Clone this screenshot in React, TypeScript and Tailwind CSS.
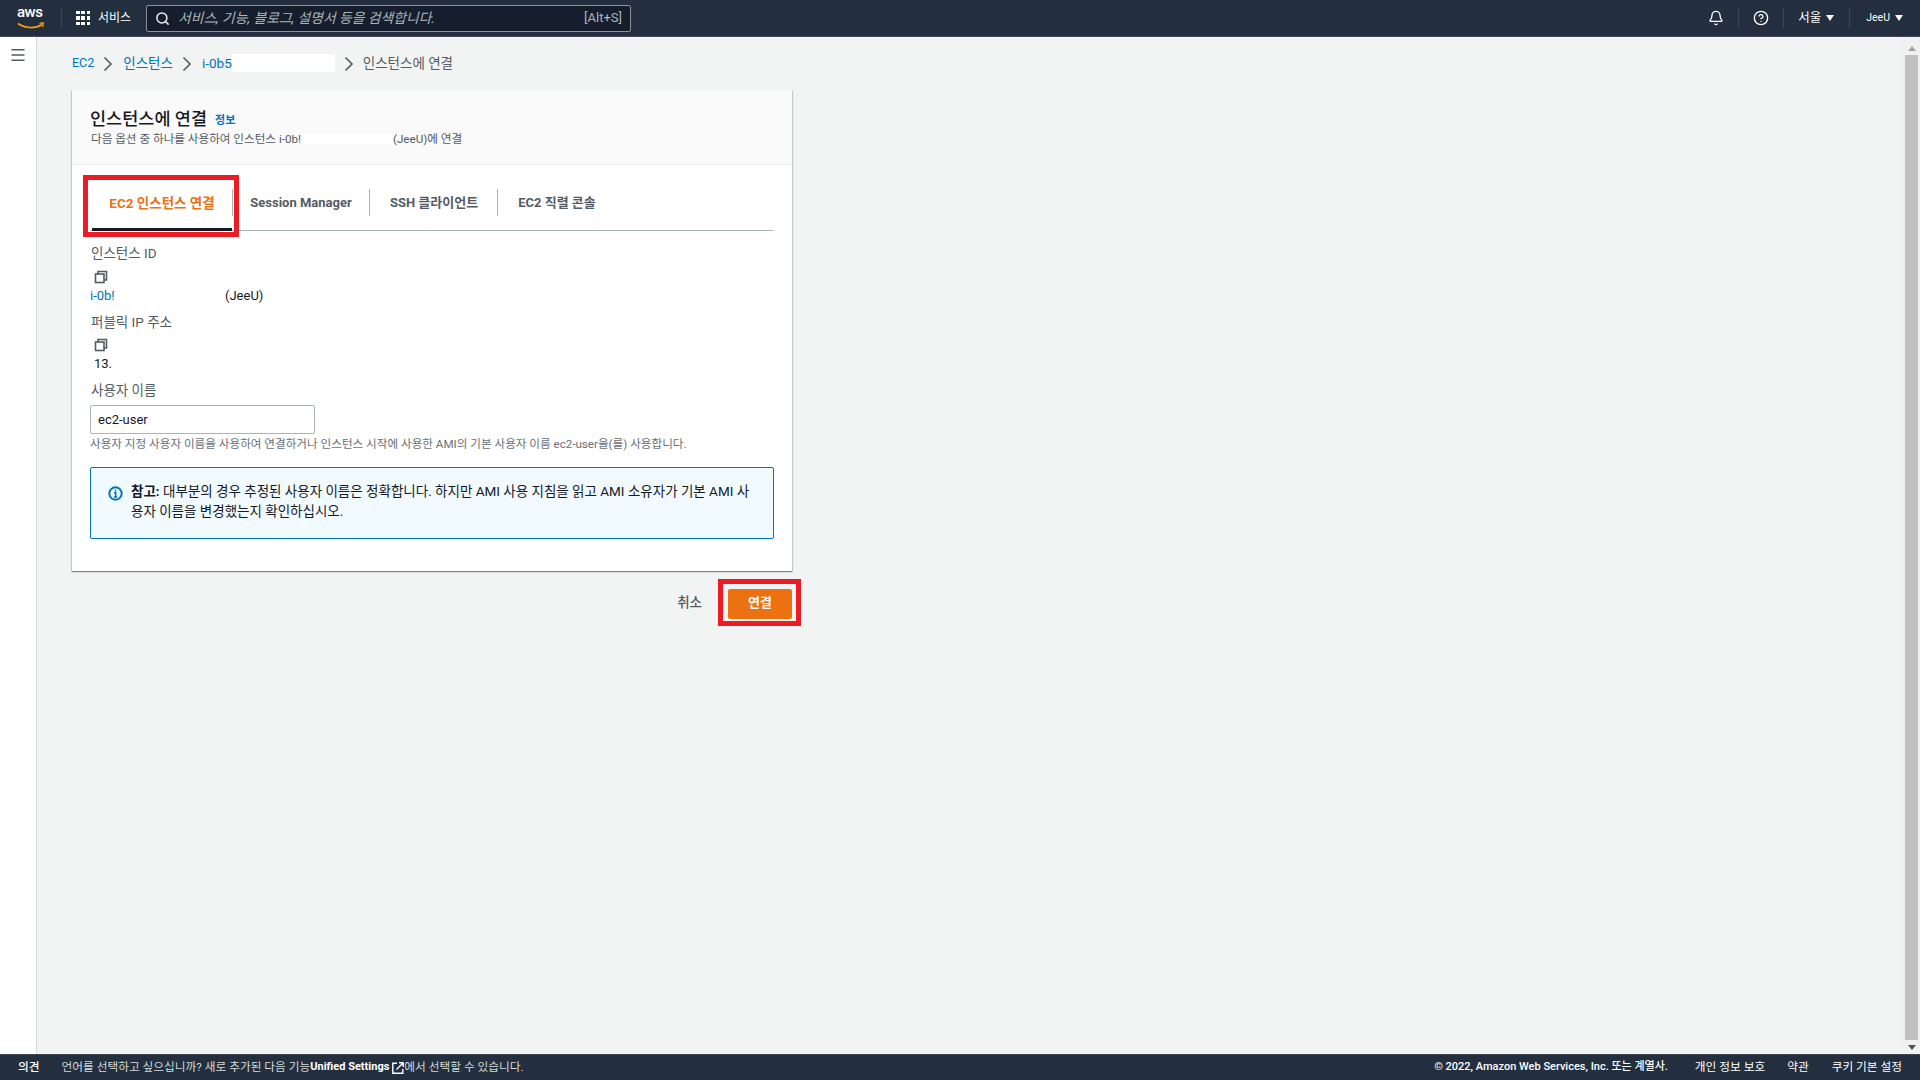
import { Bell, CircleHelp, Menu, Search } from "lucide-react";

const font = "font-['Roboto','Noto_Sans_CJK_KR',sans-serif]";

function Chevron() {
  return (
    <svg width="10" height="16" viewBox="0 0 10 16" fill="none" stroke="#545b64" strokeWidth="1.6">
      <path d="M1.5 1.5 8 8l-6.5 6.5" />
    </svg>
  );
}

function CopyIcon() {
  return (
    <svg width="14" height="14" viewBox="0 0 14 14" fill="none" stroke="#545b64" strokeWidth="1.6">
      <rect x="1.5" y="4" width="8.5" height="8.5" />
      <path d="M4 4V1.5h8.5V10H10" />
    </svg>
  );
}

function Caret() {
  return <span className="block w-0 h-0 border-x-[4px] border-x-transparent border-t-[6px] border-t-white" />;
}

function AwsLogo() {
  return (
    <div className="relative w-[28px] h-[24px]">
      <span className="absolute left-0 -top-[3px] text-white text-[15px] leading-[18px] font-medium tracking-[-0.5px]">aws</span>
      <svg className="absolute left-0 bottom-0" width="28" height="8" viewBox="0 0 28 8" fill="none">
        <path d="M1 1.5c7 5 17 5.5 24 1" stroke="#ff9900" strokeWidth="1.6" />
        <path d="M22.5 1.2 26.5 1 25.6 5" stroke="#ff9900" strokeWidth="1.3" />
      </svg>
    </div>
  );
}

function Header() {
  return (
    <header className="h-[37px] shrink-0 bg-[#232f3e] border-b border-[#414750] flex items-center text-white">
      <div className="ml-[17px] mr-[16px]">
        <AwsLogo />
      </div>
      <div className="w-px h-[20px] bg-[#414750]" />
      <div className="ml-[14px] grid grid-cols-3 gap-[2px] w-[14px]">
        {Array.from({ length: 9 }).map((_, i) => (
          <span key={i} className="w-[3.5px] h-[3.5px] bg-white" />
        ))}
      </div>
      <span className="ml-[8px] text-[12px] w-[36px]">서비스</span>
      <div className="ml-[12px] w-[485px] h-[27px] bg-[#161e2d] border border-[#879596] rounded-[2px] flex items-center pl-[8px] pr-[8px]">
        <Search size={15} strokeWidth={2.4} className="text-[#eaeded]" />
        <span className="ml-[8px] italic text-[13.8px] text-[#aab7b8]">서비스, 기능, 블로그, 설명서 등을 검색합니다.</span>
        <span className="ml-auto text-[13px] text-[#aab7b8]">[Alt+S]</span>
      </div>
      <div className="ml-auto flex items-center">
        <Bell size={16} strokeWidth={2} />
        <div className="w-px h-[20px] bg-[#414750] ml-[14px]" />
        <CircleHelp size={16} strokeWidth={2} className="ml-[14px]" />
        <div className="w-px h-[20px] bg-[#414750] ml-[14px]" />
        <span className="ml-[14px] text-[12.5px]">서울</span>
        <span className="ml-[5px]"><Caret /></span>
        <div className="w-px h-[20px] bg-[#414750] ml-[15px]" />
        <span className="ml-[16px] text-[10.5px]">JeeU</span>
        <span className="ml-[5px] mr-[17px]"><Caret /></span>
      </div>
    </header>
  );
}

function Breadcrumbs() {
  return (
    <nav className="h-[53px] flex items-center text-[13.5px] pb-[1px]">
      <a className="text-[#0073bb] text-[12.5px]">EC2</a>
      <span className="ml-[9px] mr-[10px] mt-[2px]"><Chevron /></span>
      <a className="text-[#0073bb]">인스턴스</a>
      <span className="ml-[9px] mr-[10px] mt-[2px]"><Chevron /></span>
      <a className="text-[#0073bb]">i-0b5</a>
      <span className="w-[103px] h-[18px] bg-white" />
      <span className="ml-[9px] mr-[9px] mt-[2px]"><Chevron /></span>
      <span className="text-[#545b64]">인스턴스에 연결</span>
    </nav>
  );
}

function Tabs() {
  return (
    <div className="relative flex items-stretch h-[56px] border-b border-[#aab7b8]">
      <div className="relative w-[140px] ml-[2px] pt-[3px] flex items-center justify-center text-[13.5px] font-bold text-[#ec7211] border-b-[3px] border-[#16191f] -mb-px">
        EC2 인스턴스 연결
        <div className="absolute right-[-1px] top-[14px] h-[27px] w-px bg-[#aab7b8]" />
        {/* red annotation */}
        <div className="absolute -left-[9px] top-0 w-[156px] h-[62px] border-[5px] border-[#ed1c24]" />
      </div>
      {[
        { label: "Session Manager", w: "w-[138px]" },
        { label: "SSH 클라이언트", w: "w-[128px]" },
        { label: "EC2 직렬 콘솔", w: "w-[118px]" },
      ].map((tab, i) => (
        <div key={tab.label} className={`relative ${tab.w} pt-[1px] flex items-center justify-center text-[13px] font-bold text-[#545b64]`}>
          {tab.label}
          {i < 2 && <div className="absolute right-0 top-[14px] h-[27px] w-px bg-[#aab7b8]" />}
        </div>
      ))}
    </div>
  );
}

function Content() {
  return (
    <div className="px-[18px] pt-[10px] pb-[32px]">
      <Tabs />
      <div className="pt-[13px] text-[13px] leading-[18px]">
        <div className="pl-px text-[#545b64] text-[13.5px] h-[18px]">인스턴스 ID</div>
        <div className="mt-[8px] ml-[4px] h-[14px]"><CopyIcon /></div>
        <div className="mt-[3px] h-[18px] flex">
          <a className="text-[#0073bb] w-[135px]">i-0b!</a>
          <span className="text-[#16191f]">(JeeU)</span>
        </div>
        <div className="mt-[8px] pl-px text-[#545b64] text-[13.5px] h-[18px]">퍼블릭 IP 주소</div>
        <div className="mt-[7px] ml-[4px] h-[14px]"><CopyIcon /></div>
        <div className="mt-[3px] ml-[4px] h-[18px] text-[#16191f]">13.</div>
        <div className="mt-[8px] pl-px text-[#545b64] text-[13.5px] h-[18px]">사용자 이름</div>
        <input
          readOnly
          value="ec2-user"
          className="block mt-[6px] w-[225px] h-[29px] px-[7px] bg-white border border-[#aab7b8] rounded-[2px] text-[13px] text-[#16191f] outline-none"
        />
        <p className="mt-[2px] text-[11.6px] leading-[16px] text-[#687078]">
          사용자 지정 사용자 이름을 사용하여 연결하거나 인스턴스 시작에 사용한 AMI의 기본 사용자 이름 ec2-user을(를) 사용합니다.
        </p>
        <div className="mt-[15px] h-[72px] border border-[#0073bb] rounded-[2px] bg-[#f1faff] flex pl-[17px] pr-[22px] pt-[13px]">
          <svg className="mt-[5px] shrink-0" width="15" height="15" viewBox="0 0 15 15" fill="none">
            <circle cx="7.5" cy="7.5" r="6.2" stroke="#0073bb" strokeWidth="2" />
            <path d="M7.5 3.6v1.8M6 6.7h1.7v4.2M6 11h3.2" stroke="#0073bb" strokeWidth="1.5" />
          </svg>
          <p className="ml-[8px] text-[13.5px] leading-[20px] text-[#16191f] break-all">
            <b>참고:</b> 대부분의 경우 추정된 사용자 이름은 정확합니다. 하지만 AMI 사용 지침을 읽고 AMI 소유자가 기본 AMI 사용자 이름을 변경했는지 확인하십시오.
          </p>
        </div>
      </div>
    </div>
  );
}

function Card() {
  return (
    <section className="w-[720px] bg-white shadow-[0_1px_1px_0_rgba(0,28,36,0.3),1px_1px_1px_0_rgba(0,28,36,0.15),-1px_1px_1px_0_rgba(0,28,36,0.15)]">
      <div className="h-[75px] bg-[#fafafa] border-b border-[#eaeded] pl-[18px] pt-[18px]">
        <div className="flex items-baseline">
          <h1 className="text-[17.5px] leading-[22px] font-medium text-[#16191f]">인스턴스에 연결</h1>
          <a className="ml-[8px] -translate-y-px text-[11px] font-bold text-[#0073bb]">정보</a>
        </div>
        <div className="flex items-center pl-px text-[11.6px] leading-[16px] text-[#545b64]">
          다음 옵션 중 하나를 사용하여 인스턴스 i-0b!
          <span className="w-[92px] h-[10px] bg-white" />
          (JeeU)에 연결
        </div>
      </div>
      <Content />
    </section>
  );
}

function Actions() {
  return (
    <div className="w-[720px] flex justify-end items-center mt-[18px]">
      <span className="mb-[3px] text-[13.5px] font-medium text-[#545b64] mr-[26px]">취소</span>
      <div className="relative">
        <button className="block w-[64px] h-[30px] pb-[3px] bg-[#ec7211] rounded-[2px] text-white text-[13px] font-bold">연결</button>
        <div className="absolute -left-[10px] -top-[10px] w-[83px] h-[47px] border-[5px] border-[#ed1c24]" />
      </div>
    </div>
  );
}

function ScrollBar() {
  return (
    <div className="w-[17px] shrink-0 bg-[#f1f1f1] flex flex-col items-center">
      <span className="mt-[9px] w-0 h-0 border-x-[4px] border-x-transparent border-b-[5px] border-b-[#a3a3a3]" />
      <div className="mt-[4px] w-[13px] flex-1 bg-[#c1c1c1]" />
      <span className="mt-[5px] mb-[4px] w-0 h-0 border-x-[4px] border-x-transparent border-t-[5px] border-t-[#505050]" />
    </div>
  );
}

function Footer() {
  return (
    <footer className="h-[26px] shrink-0 bg-[#232f3e] border-t border-[#414750] flex items-center text-[11.7px] text-white">
      <span className="ml-[18px] font-medium">의견</span>
      <span className="ml-[22px] text-[#d5dbdb]">언어를 선택하고 싶으십니까? 새로 추가된 다음 기능</span>
      <b className="text-[11px]">Unified Settings</b>
      <svg className="ml-[3px]" width="12" height="12" viewBox="0 0 12 12" fill="none" stroke="white" strokeWidth="1.4">
        <path d="M5 1.2H.8v10h10V7M4.5 7.5 11 1M7 .8h4.2V5" />
      </svg>
      <span className="text-[#d5dbdb]">에서 선택할 수 있습니다.</span>
      <div className="ml-auto flex items-center mr-[18px]">
        <span className="font-medium text-[11px]">© 2022, Amazon Web Services, Inc. 또는 계열사.</span>
        <span className="ml-[27px]">개인 정보 보호</span>
        <span className="ml-[22px]">약관</span>
        <span className="ml-[23px]">쿠키 기본 설정</span>
      </div>
    </footer>
  );
}

export default function App() {
  return (
    <div className={`h-screen flex flex-col overflow-hidden bg-[#f2f3f3] ${font}`}>
      <Header />
      <div className="flex-1 flex min-h-0">
        <aside className="w-[37px] shrink-0 bg-white border-r border-[#d5dbdb] flex justify-center pt-[9px]">
          <Menu size={18} strokeWidth={2} className="text-[#545b64]" />
        </aside>
        <main className="flex-1 pl-[35px]">
          <Breadcrumbs />
          <Card />
          <Actions />
        </main>
        <ScrollBar />
      </div>
      <Footer />
    </div>
  );
}
